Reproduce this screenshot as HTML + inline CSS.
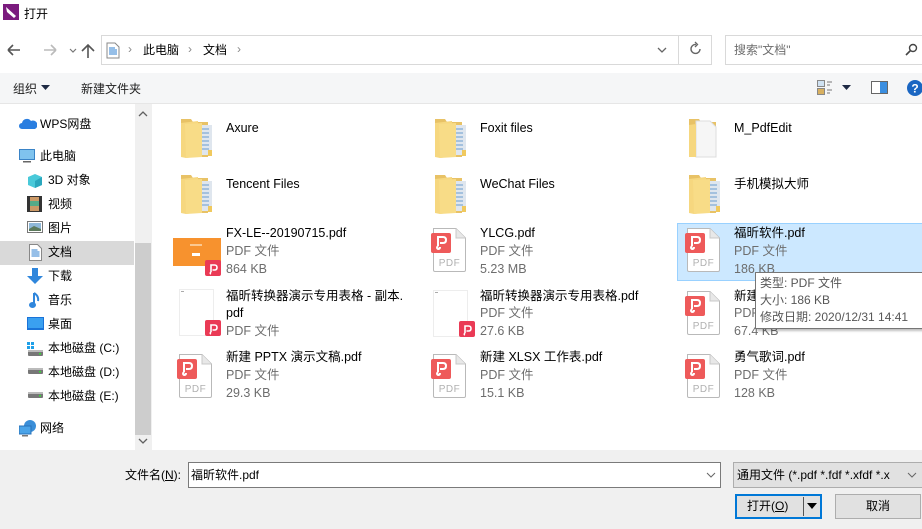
<!DOCTYPE html>
<html><head><meta charset="utf-8"><style>
*{margin:0;padding:0;box-sizing:border-box}
body{width:922px;height:529px;overflow:hidden;background:#fff;font-family:"Liberation Sans","Noto Sans CJK SC",sans-serif;font-size:12px;color:#000;position:relative}
.a{position:absolute}
.t{position:absolute;white-space:nowrap;line-height:18px}
.g{color:#6d6d6d}
.nm{font-size:12.5px}
.side .t{font-size:12px}
</style></head><body>
<svg width="0" height="0" style="position:absolute">
<defs>
<g id="fold">
<path d="M1 2 L11 2 L13 5 L28 5 L28 40 L1 40 Z" fill="#e8c266"/>
<rect x="19" y="8" width="13" height="30" fill="#dfe6ee"/>
<path d="M21 12h8M21 16h8M21 20h8M21 24h8M21 28h8M21 32h8" stroke="#6a9ccf" stroke-width="1"/>
<path d="M1 6 L18 4 L19 39 L6 41 L1 40 Z" fill="#f6d77f"/>
<path d="M5 7 L22 6 L22 40 L6 41Z" fill="#f8dc87"/>
<rect x="28" y="33" width="4" height="6" fill="#f0c95e"/>
</g>
<g id="pdf">
<path d="M2.5 0.5 H25 L34.5 10 V42 Q34.5 43.5 33 43.5 H4 Q2.5 43.5 2.5 42 Z" fill="#fff" stroke="#b9b9b9"/>
<path d="M25 0.5 V10 H34.5" fill="#e8e8e8" stroke="#c8c8c8"/>
<rect x="0" y="5" width="20" height="20" rx="2" fill="#ee5a5a"/>
<path d="M7 18 V9 H12 Q15 9 15 12 Q15 15 12 15 H9 M7 18 Q5 20 7 21 Q9 21 9 19" fill="none" stroke="#fff" stroke-width="2"/>
<text x="18.5" y="38" font-family="Liberation Sans" font-size="10" fill="#b0b0b0" text-anchor="middle" letter-spacing="0.5">PDF</text>
</g>
<g id="badge">
<rect x="0" y="0" width="16" height="16" rx="2" fill="#ea3a55"/>
<path d="M6 12 V5 H9.5 Q12 5 12 7.5 Q12 10 9.5 10 H7.5 M6 12 Q4.5 13.5 6 14" fill="none" stroke="#fff" stroke-width="1.6"/>
</g>
</defs></svg>

<!-- title -->
<svg class="a" style="left:3px;top:4px" width="16" height="16"><rect width="16" height="16" fill="#7b1b7e"/><path d="M3 3 L13 12 L11 14 L4 8Z" fill="#fff"/></svg>
<div class="t" style="left:24px;top:5px;font-size:12px">打开</div>

<!-- nav -->
<svg class="a" style="left:6px;top:42px" width="100" height="18">
<path d="M2 8h12M2 8l5-5M2 8l5 5" stroke="#555" stroke-width="1.6" fill="none"/>
<path d="M38 8h12M50 8l-5-5M50 8l-5 5" stroke="#bbb" stroke-width="1.6" fill="none"/>
<path d="M64 7l3 3 3-3" stroke="#777" stroke-width="1.2" fill="none"/>
<path d="M82 16V3M76 9l6-6 6 6" stroke="#555" stroke-width="1.6" fill="none"/>
</svg>
<div class="a" style="left:101px;top:35px;width:578px;height:30px;border:1px solid #d9d9d9;border-right:none"></div>
<div class="a" style="left:678px;top:35px;width:34px;height:30px;border:1px solid #d9d9d9"></div>
<svg class="a" style="left:106px;top:42px" width="14" height="17"><path d="M1 1h8l4 4v11H1Z" fill="#fff" stroke="#888"/><path d="M3 6h6M3 8h8M3 10h8M3 12h8" stroke="#2d7fd0"/></svg>
<div class="t" style="left:128px;top:40px;color:#888">›</div>
<div class="t" style="left:143px;top:41px">此电脑</div>
<div class="t" style="left:188px;top:40px;color:#888">›</div>
<div class="t" style="left:203px;top:41px">文档</div>
<div class="t" style="left:237px;top:40px;color:#888">›</div>
<svg class="a" style="left:656px;top:45px" width="12" height="10"><path d="M2 3l4 4 4-4" stroke="#666" stroke-width="1.3" fill="none"/></svg>
<svg class="a" style="left:688px;top:41px" width="16" height="16"><path d="M12 8 A4.5 4.5 0 1 1 8 3.5" stroke="#666" stroke-width="1.4" fill="none"/><path d="M7 1l2.5 2.5L7 6" stroke="#666" stroke-width="1.3" fill="none"/></svg>
<div class="a" style="left:725px;top:35px;width:200px;height:30px;border:1px solid #d9d9d9"></div>
<div class="t" style="left:734px;top:41px;color:#6d6d6d">搜索"文档"</div>
<svg class="a" style="left:905px;top:43px" width="14" height="14"><circle cx="8" cy="5" r="3.5" stroke="#444" stroke-width="1.4" fill="none"/><path d="M5.5 7.5L1 12" stroke="#444" stroke-width="1.6"/></svg>

<!-- toolbar -->
<div class="a" style="left:0;top:73px;width:922px;height:31px;background:#f5f6f7;border-bottom:1px solid #e6e6e6"></div>
<div class="t" style="left:13px;top:80px;color:#1e1e1e">组织</div>
<svg class="a" style="left:41px;top:85px" width="10" height="6"><path d="M0 0h9l-4.5 5z" fill="#1e2a44"/></svg>
<div class="t" style="left:81px;top:80px;color:#1e1e1e">新建文件夹</div>
<svg class="a" style="left:817px;top:80px" width="16" height="16"><rect x="0.5" y="0.5" width="7" height="6" fill="#cfe2f3" stroke="#888"/><rect x="0.5" y="8.5" width="7" height="6" fill="#d8b060" stroke="#888"/><path d="M10 2h5M10 5h3M10 10h5M10 13h3" stroke="#777"/></svg>
<svg class="a" style="left:842px;top:85px" width="10" height="6"><path d="M0 0h9l-4.5 5z" fill="#1e2a44"/></svg>
<svg class="a" style="left:871px;top:81px" width="18" height="14"><rect x="0.5" y="0.5" width="16" height="12" fill="#fff" stroke="#666"/><rect x="9" y="1" width="7" height="11" fill="#3a8ee0"/></svg>
<svg class="a" style="left:907px;top:80px" width="16" height="16"><circle cx="8" cy="8" r="8" fill="#1a66c2"/><text x="8" y="12.5" font-size="12" font-weight="bold" fill="#fff" text-anchor="middle" font-family="Liberation Sans">?</text></svg>

<!-- sidebar -->
<div class="side">
<svg class="a" style="left:19px;top:118px" width="18" height="12"><path d="M3 11a3 3 0 0 1 0-6a5 5 0 0 1 9-2a4 4 0 0 1 4 8z" fill="#2a7ee0"/></svg>
<div class="t" style="left:40px;top:115px">WPS网盘</div>
<svg class="a" style="left:19px;top:149px" width="16" height="14"><rect x="0.5" y="0.5" width="15" height="10" fill="#7fc3ee" stroke="#3a84c7"/><rect x="4" y="12" width="8" height="1.5" fill="#666"/></svg>
<div class="t" style="left:40px;top:147px">此电脑</div>
<svg class="a" style="left:27px;top:173px" width="16" height="16"><path d="M8 1l7 3v8l-7 3-7-3V4z" fill="#49c9d9"/><path d="M8 8l7-4v8l-7 3z" fill="#2aa7bd"/></svg>
<div class="t" style="left:48px;top:171px">3D 对象</div>
<svg class="a" style="left:27px;top:196px" width="15" height="16"><rect width="15" height="16" fill="#333"/><rect x="3" y="1" width="9" height="14" fill="#c96"/><rect x="3" y="5" width="9" height="5" fill="#5a8"/></svg>
<div class="t" style="left:48px;top:195px">视频</div>
<svg class="a" style="left:27px;top:221px" width="16" height="13"><rect x="0.5" y="0.5" width="15" height="11" fill="#fff" stroke="#777"/><rect x="2" y="2" width="12" height="8" fill="#8fb8d8"/><path d="M2 8l5-3 7 3v2H2z" fill="#5c7a5c"/></svg>
<div class="t" style="left:48px;top:219px">图片</div>
<div class="a" style="left:0;top:241px;width:134px;height:24px;background:#d9d9d9"></div>
<svg class="a" style="left:29px;top:244px" width="13" height="17"><path d="M0.5 0.5h8l4 4v12H0.5Z" fill="#fff" stroke="#888"/><path d="M2.5 6h6M2.5 8h8M2.5 10h8M2.5 12h8" stroke="#2d7fd0"/></svg>
<div class="t" style="left:48px;top:243px">文档</div>
<svg class="a" style="left:27px;top:268px" width="16" height="17"><path d="M5 0h6v8h5l-8 8-8-8h5z" fill="#2f86dc"/></svg>
<div class="t" style="left:48px;top:267px">下载</div>
<svg class="a" style="left:29px;top:292px" width="12" height="17"><path d="M5 1v11" stroke="#2f86dc" stroke-width="2"/><ellipse cx="3.5" cy="13" rx="3.5" ry="3" fill="#2f86dc"/><path d="M5 1q5 3 4 8" stroke="#2f86dc" stroke-width="2" fill="none"/></svg>
<div class="t" style="left:48px;top:291px">音乐</div>
<svg class="a" style="left:27px;top:317px" width="17" height="13"><rect width="17" height="13" fill="#1a73d8"/><rect x="1" y="1" width="15" height="10" fill="#3aa0f0"/></svg>
<div class="t" style="left:48px;top:315px">桌面</div>
<svg class="a" style="left:27px;top:342px" width="17" height="14"><rect x="0" y="0" width="3" height="3" fill="#1fa0e8"/><rect x="4" y="0" width="3" height="3" fill="#1fa0e8"/><rect x="0" y="4" width="3" height="3" fill="#1fa0e8"/><rect x="4" y="4" width="3" height="3" fill="#1fa0e8"/><rect x="1" y="8" width="15" height="6" rx="1" fill="#777"/><rect x="1" y="8" width="15" height="2" fill="#bbb"/><rect x="12" y="11" width="2" height="1.5" fill="#3d3"/></svg>
<div class="t" style="left:48px;top:339px">本地磁盘 (C:)</div>
<svg class="a" style="left:27px;top:368px" width="17" height="7"><rect x="1" y="0" width="15" height="6" rx="1" fill="#777"/><rect x="1" y="0" width="15" height="2" fill="#bbb"/><rect x="12" y="3" width="2" height="1.5" fill="#3d3"/></svg>
<div class="t" style="left:48px;top:363px">本地磁盘 (D:)</div>
<svg class="a" style="left:27px;top:392px" width="17" height="7"><rect x="1" y="0" width="15" height="6" rx="1" fill="#777"/><rect x="1" y="0" width="15" height="2" fill="#bbb"/><rect x="12" y="3" width="2" height="1.5" fill="#3d3"/></svg>
<div class="t" style="left:48px;top:387px">本地磁盘 (E:)</div>
<svg class="a" style="left:19px;top:420px" width="18" height="17"><circle cx="11" cy="6" r="6" fill="#3a8ed8"/><rect x="0" y="6" width="12" height="8" fill="#4aa3e8" stroke="#2770b8"/><rect x="3" y="15" width="6" height="1.5" fill="#777"/></svg>
<div class="t" style="left:40px;top:419px">网络</div>
</div>
<div class="a" style="left:135px;top:104px;width:16px;height:346px;background:#f0f0f0"></div>
<div class="a" style="left:135px;top:243px;width:16px;height:192px;background:#cdcdcd"></div>
<svg class="a" style="left:138px;top:110px" width="10" height="8"><path d="M1 6l4-4 4 4" stroke="#606060" stroke-width="1.3" fill="none"/></svg>
<svg class="a" style="left:138px;top:437px" width="10" height="8"><path d="M1 2l4 4 4-4" stroke="#606060" stroke-width="1.3" fill="none"/></svg>
<div class="a" style="left:151px;top:104px;width:1px;height:346px;background:#f0f0f0"></div>

<!-- folders -->
<svg class="a" style="left:180px;top:117px" width="34" height="42"><use href="#fold"/></svg>
<div class="t nm" style="left:226px;top:119px">Axure</div>
<svg class="a" style="left:434px;top:117px" width="34" height="42"><use href="#fold"/></svg>
<div class="t nm" style="left:480px;top:119px">Foxit files</div>
<svg class="a" style="left:688px;top:117px" width="34" height="42"><path d="M1 2 L11 2 L13 5 L28 5 L28 40 L1 40 Z" fill="#e8c266"/><path d="M8 4h14l6 6v30H8z" fill="#f6f6f6" stroke="#ddd"/><path d="M1 8 L8 7 L8 40 L1 40Z" fill="#f6d77f"/></svg>
<div class="t nm" style="left:734px;top:119px">M_PdfEdit</div>
<svg class="a" style="left:180px;top:173px" width="34" height="42"><use href="#fold"/></svg>
<div class="t nm" style="left:226px;top:175px">Tencent Files</div>
<svg class="a" style="left:434px;top:173px" width="34" height="42"><use href="#fold"/></svg>
<div class="t nm" style="left:480px;top:175px">WeChat Files</div>
<svg class="a" style="left:688px;top:173px" width="34" height="42"><use href="#fold"/></svg>
<div class="t nm" style="left:734px;top:175px">手机模拟大师</div>

<!-- selection -->
<div class="a" style="left:677px;top:223px;width:250px;height:58px;background:#cce8ff;border:1px solid #99d1ff"></div>

<!-- row 3 -->
<div class="a" style="left:173px;top:238px;width:48px;height:28px;background:#f7922e"></div>
<div class="a" style="left:190px;top:244px;width:12px;height:2px;background:#fbc890"></div>
<div class="a" style="left:192px;top:253px;width:8px;height:3px;background:#fff"></div>
<svg class="a" style="left:205px;top:260px" width="16" height="16"><use href="#badge"/></svg>
<div class="t nm" style="left:226px;top:224px">FX-LE--20190715.pdf</div>
<div class="t g nm" style="left:226px;top:242px">PDF 文件</div>
<div class="t g nm" style="left:226px;top:260px">864 KB</div>

<svg class="a" style="left:431px;top:228px" width="36" height="45"><use href="#pdf"/></svg>
<div class="t nm" style="left:480px;top:224px">YLCG.pdf</div>
<div class="t g nm" style="left:480px;top:242px">PDF 文件</div>
<div class="t g nm" style="left:480px;top:260px">5.23 MB</div>

<svg class="a" style="left:685px;top:228px" width="36" height="45"><use href="#pdf"/></svg>
<div class="t nm" style="left:734px;top:224px">福昕软件.pdf</div>
<div class="t g nm" style="left:734px;top:242px">PDF 文件</div>
<div class="t g nm" style="left:734px;top:260px">186 KB</div>

<!-- row 4 -->
<div class="a" style="left:179px;top:289px;width:35px;height:47px;border:1px solid #ededed;background:#fff"></div>
<div class="a" style="left:181px;top:291px;width:3px;height:1px;background:#aaa"></div>
<svg class="a" style="left:205px;top:320px" width="16" height="16"><use href="#badge"/></svg>
<div class="t nm" style="left:226px;top:287px">福昕转换器演示专用表格 - 副本.</div>
<div class="t nm" style="left:226px;top:304px">pdf</div>
<div class="t g nm" style="left:226px;top:322px">PDF 文件</div>

<div class="a" style="left:433px;top:290px;width:35px;height:47px;border:1px solid #ededed;background:#fff"></div>
<div class="a" style="left:435px;top:292px;width:3px;height:1px;background:#aaa"></div>
<svg class="a" style="left:459px;top:321px" width="16" height="16"><use href="#badge"/></svg>
<div class="t nm" style="left:480px;top:287px">福昕转换器演示专用表格.pdf</div>
<div class="t g nm" style="left:480px;top:304px">PDF 文件</div>
<div class="t g nm" style="left:480px;top:322px">27.6 KB</div>

<svg class="a" style="left:685px;top:291px" width="36" height="45"><use href="#pdf"/></svg>
<div class="t nm" style="left:734px;top:287px">新建</div>
<div class="t g nm" style="left:734px;top:304px">PDF</div>
<div class="t g nm" style="left:734px;top:322px">67.4 KB</div>

<!-- row 5 -->
<svg class="a" style="left:177px;top:354px" width="36" height="45"><use href="#pdf"/></svg>
<div class="t nm" style="left:226px;top:348px">新建 PPTX 演示文稿.pdf</div>
<div class="t g nm" style="left:226px;top:366px">PDF 文件</div>
<div class="t g nm" style="left:226px;top:384px">29.3 KB</div>
<svg class="a" style="left:431px;top:354px" width="36" height="45"><use href="#pdf"/></svg>
<div class="t nm" style="left:480px;top:348px">新建 XLSX 工作表.pdf</div>
<div class="t g nm" style="left:480px;top:366px">PDF 文件</div>
<div class="t g nm" style="left:480px;top:384px">15.1 KB</div>
<svg class="a" style="left:685px;top:354px" width="36" height="45"><use href="#pdf"/></svg>
<div class="t nm" style="left:734px;top:348px">勇气歌词.pdf</div>
<div class="t g nm" style="left:734px;top:366px">PDF 文件</div>
<div class="t g nm" style="left:734px;top:384px">128 KB</div>

<!-- tooltip -->
<div class="a" style="left:755px;top:272px;width:175px;height:57px;background:#fff;border:1px solid #767676;box-shadow:2px 2px 2px rgba(0,0,0,.25)"></div>
<div class="t" style="left:760px;top:274px;color:#575757">类型: PDF 文件</div>
<div class="t" style="left:760px;top:291px;color:#575757">大小: 186 KB</div>
<div class="t" style="left:760px;top:308px;color:#575757">修改日期: 2020/12/31 14:41</div>

<!-- bottom -->
<div class="a" style="left:0;top:450px;width:922px;height:79px;background:#f0f0f0"></div>
<div class="t" style="left:125px;top:466px">文件名(<u>N</u>):</div>
<div class="a" style="left:188px;top:462px;width:533px;height:26px;background:#fff;border:1px solid #7a7a7a"></div>
<div class="t" style="left:191px;top:466px">福昕软件.pdf</div>
<svg class="a" style="left:706px;top:471px" width="10" height="8"><path d="M1 2l4 4 4-4" stroke="#666" fill="none"/></svg>
<div class="a" style="left:733px;top:462px;width:192px;height:26px;background:#e1e1e1;border:1px solid #adadad"></div>
<div class="t" style="left:737px;top:466px">通用文件 (*.pdf *.fdf *.xfdf *.x</div>
<svg class="a" style="left:907px;top:471px" width="10" height="8"><path d="M1 2l4 4 4-4" stroke="#666" fill="none"/></svg>
<div class="a" style="left:735px;top:494px;width:87px;height:25px;background:#e1e1e1;border:2px solid #0078d7"></div>
<div class="a" style="left:803px;top:497px;width:1px;height:19px;background:#555"></div>
<svg class="a" style="left:807px;top:503px" width="11" height="7"><path d="M0 0h10l-5 6z" fill="#000"/></svg>
<div class="t" style="left:747px;top:497px">打开(<u>O</u>)</div>
<div class="a" style="left:835px;top:494px;width:86px;height:25px;background:#e1e1e1;border:1px solid #adadad"></div>
<div class="t" style="left:866px;top:497px">取消</div>
</body></html>
